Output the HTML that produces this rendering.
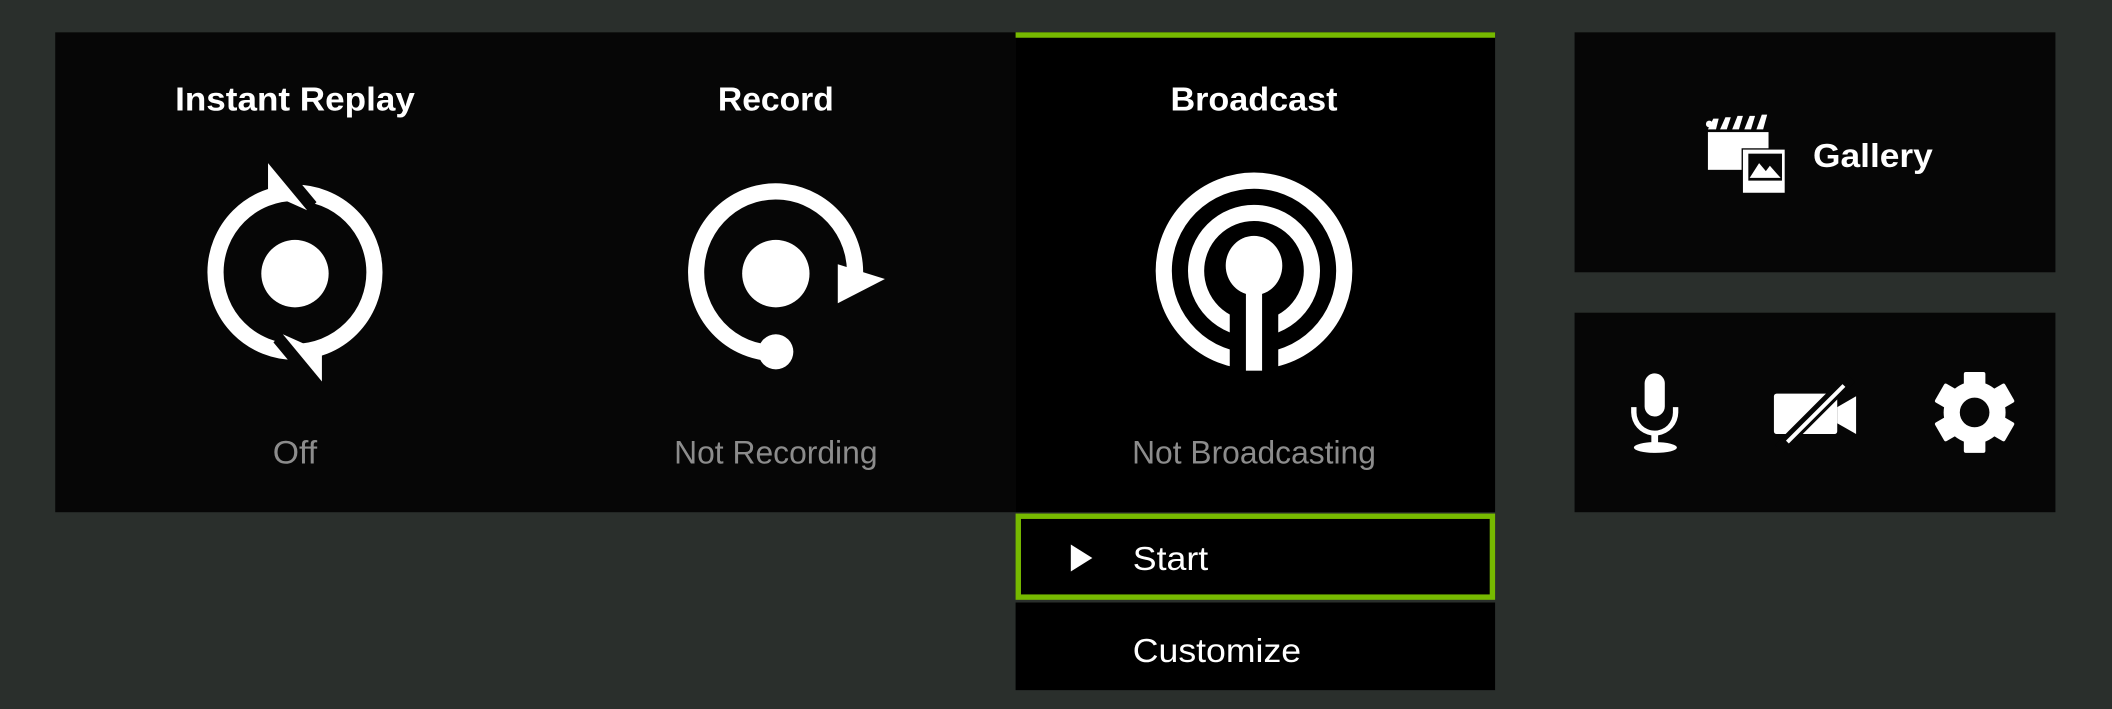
<!DOCTYPE html>
<html><head><meta charset="utf-8"><style>
html,body{margin:0;padding:0;background:#2a2f2c;width:2112px;height:709px;overflow:hidden}
svg{display:block}
text{font-family:"Liberation Sans",sans-serif}
</style></head><body>
<svg width="2112" height="709" viewBox="0 0 1568 526" preserveAspectRatio="none">
<rect x="0" y="0" width="1568" height="526" fill="#2a2f2c"/>
<rect x="41" y="24" width="713" height="356" fill="#060606"/>
<rect x="754" y="24" width="356" height="356" fill="#000"/>
<rect x="754" y="24" width="356" height="4" fill="#76b900"/>
<g fill="#fff" font-weight="bold" font-size="25" text-anchor="middle">
<text x="219" y="82" textLength="178" lengthAdjust="spacingAndGlyphs">Instant Replay</text>
<text x="576" y="82" textLength="86" lengthAdjust="spacingAndGlyphs">Record</text>
<text x="931" y="82" textLength="124" lengthAdjust="spacingAndGlyphs">Broadcast</text>
</g>
<g fill="#8c8c8c" font-size="24" text-anchor="middle">
<text x="219" y="344" textLength="33" lengthAdjust="spacingAndGlyphs">Off</text>
<text x="576" y="344" textLength="151" lengthAdjust="spacingAndGlyphs">Not Recording</text>
<text x="931" y="344" textLength="181" lengthAdjust="spacingAndGlyphs">Not Broadcasting</text>
</g>
<circle cx="219" cy="202" r="59" fill="none" stroke="#fff" stroke-width="12"/>
<polygon points="198,121 228,157 235,150 205,114" fill="#060606"/>
<polygon points="240,283 210,247 203,254 233,290" fill="#060606"/>
<polygon points="199,121 199,143 228,156" fill="#fff"/>
<polygon points="239,283 239,261 210,248" fill="#fff"/>
<circle cx="219" cy="203" r="25" fill="#fff"/>
<path d="M576,262 A59 60 0 1 1 634,212" fill="none" stroke="#fff" stroke-width="12"/>
<polygon points="622,196 657,207 622,225" fill="#fff"/>
<circle cx="576" cy="261" r="13" fill="#fff"/>
<circle cx="576" cy="203" r="25" fill="#fff"/>
<circle cx="931" cy="201" r="67" fill="none" stroke="#fff" stroke-width="12"/>
<circle cx="931" cy="201" r="43" fill="none" stroke="#fff" stroke-width="12"/>
<rect x="913" y="218" width="36" height="64" fill="#000"/>
<ellipse cx="931" cy="197" rx="21" ry="22" fill="#fff"/>
<rect x="925" y="200" width="12" height="75" fill="#fff"/>
<rect x="756" y="383" width="352" height="60" fill="#000" stroke="#76b900" stroke-width="4"/>
<polygon points="795,404 811,414 795,424" fill="#fff"/>
<text x="841" y="423" fill="#fff" font-size="25" textLength="56" lengthAdjust="spacingAndGlyphs">Start</text>
<rect x="754" y="447" width="356" height="65" fill="#000"/>
<text x="841" y="491" fill="#fff" font-size="25" textLength="125" lengthAdjust="spacingAndGlyphs">Customize</text>
<rect x="1169" y="24" width="357" height="178" fill="#060606"/>
<g fill="#fff">
<rect x="1268" y="98" width="45" height="28"/>
<path d="M1268,96 L1272,88 L1276,88 L1274,96 Z M1277,96 L1281,87 L1285,87 L1282,96 Z M1286,96 L1290,86 L1294,86 L1291,96 Z M1295,96 L1299,86 L1303,86 L1300,96 Z M1304,96 L1308,85 L1312,85 L1309,96 Z"/>
<circle cx="1269" cy="92" r="2.5"/>
<rect x="1293" y="110" width="33" height="34" fill="#060606"/>
<rect x="1294" y="111" width="31" height="32"/>
<rect x="1298" y="114" width="25" height="20" fill="#060606"/>
<path d="M1299,132 L1306,121 L1311,127 L1314,123 L1322,132 Z"/>
</g>
<text x="1346" y="124" fill="#fff" font-weight="bold" font-size="25" textLength="89" lengthAdjust="spacingAndGlyphs">Gallery</text>
<rect x="1169" y="232" width="357" height="148" fill="#060606"/>
<g fill="#fff">
<rect x="1221" y="277" width="15" height="32" rx="7.5"/>
<path d="M1211,302 L1215,302 L1215,306 A13.5 13.5 0 0 0 1242,306 L1242,302 L1246,302 L1246,306 A17.5 17.5 0 0 1 1231,323 L1231,330 L1226,330 L1226,323 A17.5 17.5 0 0 1 1211,306 Z"/>
<ellipse cx="1229" cy="332" rx="16" ry="4"/>
<rect x="1317" y="292" width="47" height="30" rx="2"/>
<polygon points="1364,302 1378,294 1378,322 1364,314"/>
</g>
<line x1="1321" y1="333" x2="1374" y2="280" stroke="#060606" stroke-width="9"/>
<line x1="1327" y1="328" x2="1369" y2="286" stroke="#fff" stroke-width="3"/>
<g fill="#fff" transform="translate(1466,306)">
<circle r="23"/>
<rect x="-8" y="-30" width="16" height="60" rx="1.5"/>
<rect x="-8" y="-30" width="16" height="60" rx="1.5" transform="rotate(60)"/>
<rect x="-8" y="-30" width="16" height="60" rx="1.5" transform="rotate(120)"/>
<circle r="11" fill="#060606"/>
</g>
</svg>
</body></html>
